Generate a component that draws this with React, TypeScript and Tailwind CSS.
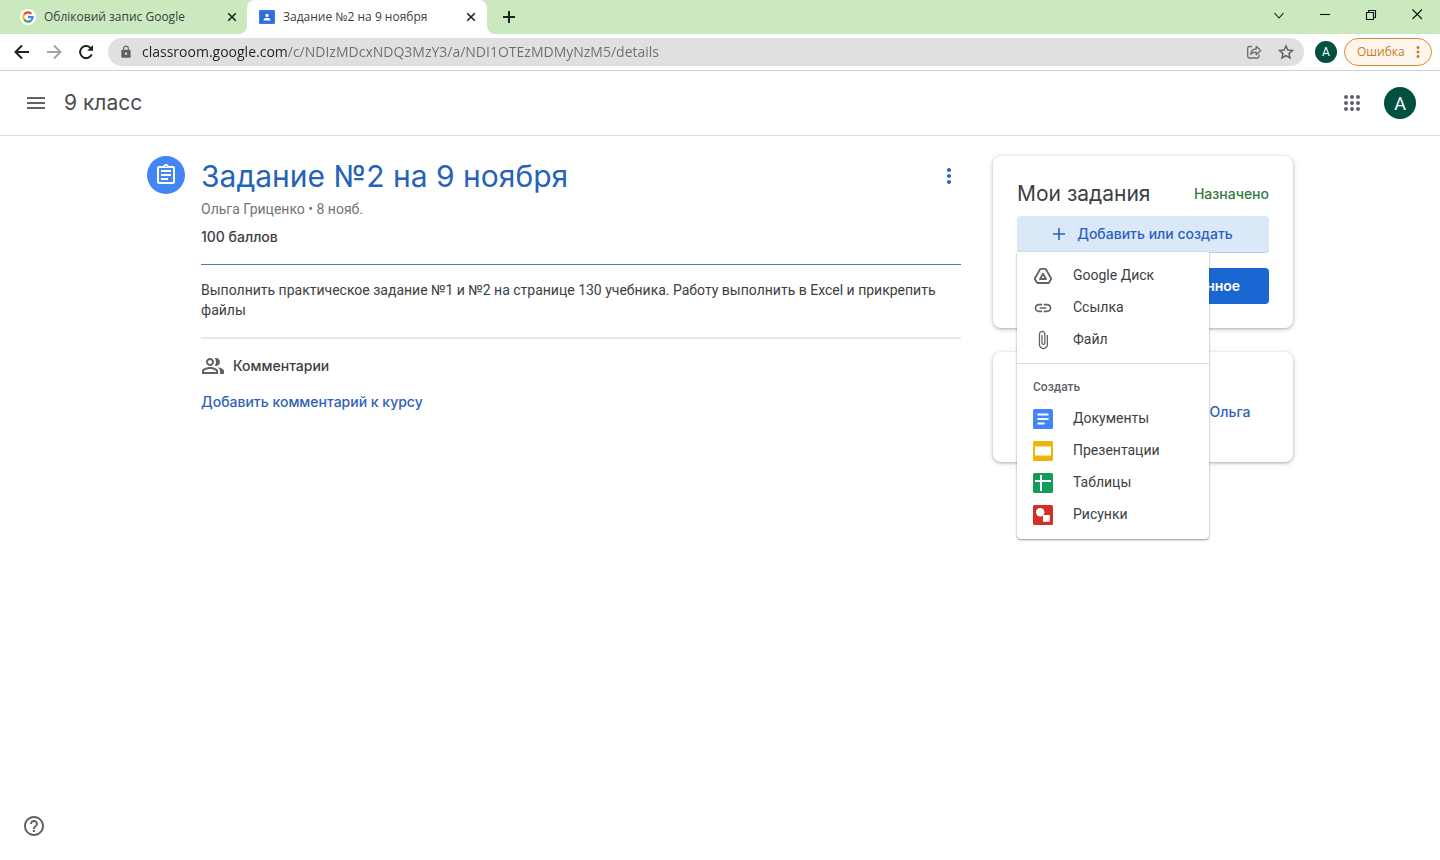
import type { ReactNode } from "react";
import {
  MdAttachFile,
  MdHelpOutline,
  MdLink,
  MdLock,
  MdMenu,
  MdMoreVert,
  MdOutlineAssignment,
} from "react-icons/md";

function GoogleLogo() {
  return (
    <svg viewBox="0 0 18 18" className="size-4 shrink-0" aria-hidden="true">
      <circle cx="9" cy="9" r="9" fill="#fff" />
      <g fill="none" strokeWidth="2.4">
        <path d="M4.6 6.2A5.2 5.2 0 0 1 12.8 5.4" stroke="#ea4335" />
        <path d="M4.6 11.8a5.2 5.2 0 0 1 0-5.7" stroke="#fbbc05" />
        <path d="M12.6 12.8a5.2 5.2 0 0 1-8-1.1" stroke="#34a853" />
        <path d="M9 9.2h5.2a5.2 5.2 0 0 1-1.7 3.7" stroke="#4285f4" />
      </g>
    </svg>
  );
}

function ClassroomLogo() {
  return (
    <svg viewBox="0 0 16 16" className="size-4 shrink-0" aria-hidden="true">
      <rect y="1" width="16" height="14" rx="1" fill="#3b7be0" />
      <rect x="1.5" y="2.5" width="13" height="11" fill="#2f6bd8" />
      <circle cx="8" cy="6.4" r="1.7" fill="#fff" />
      <path d="M4.5 11.5V11c0-1.5 2.2-2.2 3.5-2.2s3.5.7 3.5 2.2v.5z" fill="#fff" />
    </svg>
  );
}

function TabClose({ label }: { label: string }) {
  return (
    <button type="button" aria-label={label} className="flex size-4 shrink-0 items-center justify-center">
      <svg viewBox="0 0 16 16" className="size-4" stroke="#202124" strokeWidth="1.6">
        <path d="M4.2 4.2l7.600 7.600M11.800 4.200l-7.600 7.600" />
      </svg>
    </button>
  );
}

function TabStrip() {
  return (
    <div className="flex h-[34px] items-stretch bg-[#cbe9bf] font-['Open_Sans','Noto_Sans',sans-serif] text-xs text-[#3c4043]">
      <div className="flex w-[247px] items-center gap-2 pr-[7px] pl-5">
        <GoogleLogo />
        <span className="flex-1 truncate">Обліковий запис Google</span>
        <TabClose label="Закрыть вкладку Google" />
      </div>
      <div className="relative flex w-[240px] items-center gap-2 rounded-t-lg bg-white pr-2 pl-3">
        <svg viewBox="0 0 8 8" className="absolute bottom-0 -left-2 size-2" aria-hidden="true">
          <path d="M8 0v8H0a8 8 0 0 0 8-8z" fill="#fff" />
        </svg>
        <svg viewBox="0 0 8 8" className="absolute -right-2 bottom-0 size-2" aria-hidden="true">
          <path d="M0 0v8h8a8 8 0 0 1-8-8z" fill="#fff" />
        </svg>
        <ClassroomLogo />
        <span className="flex-1 truncate">Задание №2 на 9 ноября</span>
        <TabClose label="Закрыть вкладку задания" />
      </div>
      <button type="button" aria-label="Новая вкладка" className="ml-3 flex w-5 items-center justify-center">
        <svg viewBox="0 0 20 20" className="size-5" stroke="#202124" strokeWidth="2">
          <path d="M10 4v12M4 10h12" />
        </svg>
      </button>
      <div className="ml-auto flex items-center gap-[22px] pr-[11px] pb-1">
        <WindowButton label="Поиск вкладок">
          <path d="M7.5 10l4.500 5 4.500-5" />
        </WindowButton>
        <WindowButton label="Свернуть">
          <path d="M7 11.500h10" />
        </WindowButton>
        <WindowButton label="Развернуть">
          <path d="M7.500 9.500h7v7h-7zM9.500 9.500v-2h7v7h-2" />
        </WindowButton>
        <WindowButton label="Закрыть окно">
          <path d="M7.500 6.500l9.500 9.500M17 6.500l-9.500 9.500" />
        </WindowButton>
      </div>
    </div>
  );
}

function WindowButton({ label, children }: { label: string; children: ReactNode }) {
  return (
    <button type="button" aria-label={label}>
      <svg viewBox="0 0 24 24" className="size-6" fill="none" stroke="#111" strokeWidth="1.1">
        {children}
      </svg>
    </button>
  );
}

function Toolbar() {
  return (
    <div className="flex h-[37px] items-center border-b border-[#d0d0d0] bg-white pr-2 pl-3 font-['Open_Sans','Noto_Sans',sans-serif]">
      <div className="flex gap-3">
        <button type="button" aria-label="Назад">
          <svg viewBox="0 0 20 20" className="size-5" fill="none" stroke="#202124" strokeWidth="2">
            <path d="M17 10H4M10 3.500L3.500 10l6.500 6.500" />
          </svg>
        </button>
        <button type="button" aria-label="Вперёд">
          <svg viewBox="0 0 20 20" className="size-5" fill="none" stroke="#a0a3a7" strokeWidth="2">
            <path d="M3 10h13M10 3.500l6.500 6.500-6.500 6.500" />
          </svg>
        </button>
        <button type="button" aria-label="Обновить">
          <svg viewBox="0 0 20 20" className="size-5" fill="none" stroke="#202124" strokeWidth="2">
            <path d="M15.700 12.300A6 6 0 1 1 14.300 5.800L16 7.500" />
            <path d="M17 3v5.800h-5.800z" fill="#202124" stroke="none" />
          </svg>
        </button>
      </div>
      <div className="ml-3 flex h-7 flex-1 items-center rounded-full bg-[#e0e0e0] pr-2 pl-[11px]">
        <MdLock className="size-[14px] text-[#5f6368]" />
        <input
          type="text"
          aria-label="Адресная строка"
          defaultValue="classroom.google.com/c/NDIzMDcxNDQ3MzY3/a/NDI1OTEzMDMyNzM5/details"
          className="ml-[9px] min-w-0 flex-1 bg-[linear-gradient(90deg,#202124_146px,#6b6e72_146px)] bg-clip-text text-sm text-transparent outline-none"
        />
        <button type="button" aria-label="Поделиться">
          <svg viewBox="0 0 20 20" className="size-5" fill="none" stroke="#6b6b6b" strokeWidth="1.300">
            <path d="M8 4.500H5.500a1.800 1.800 0 0 0-1.800 1.800v7.900A1.800 1.800 0 0 0 5.500 16h7.700a1.800 1.800 0 0 0 1.800-1.800V12.500" />
            <path d="M6.800 12.300c.2-3.400 2.200-5.200 5.400-5.300V4.300l4.500 4.200-4.500 4.200v-2.600c-2.300 0-4 .6-5.400 2.200z" strokeLinejoin="round" />
          </svg>
        </button>
        <button type="button" aria-label="Добавить в закладки" className="ml-3">
          <svg viewBox="0 0 20 20" className="size-5" fill="none" stroke="#606366" strokeWidth="1.500">
            <path d="M10 4l1.900 4.100 4.500.5-3.400 3 1 4.400-4-2.300L6 16l1-4.400-3.400-3 4.500-.5z" />
          </svg>
        </button>
      </div>
      <button
        type="button"
        aria-label="Профиль"
        className="ml-[11px] flex size-[22px] items-center justify-center rounded-full bg-[#00503f] font-['Roboto',sans-serif] text-xs text-white"
      >
        A
      </button>
      <button
        type="button"
        className="ml-[7px] flex h-7 w-[88px] items-center justify-between rounded-full border border-[#d98c35] bg-[#fef6ec] pr-1 pl-3 text-xs text-[#c77a28]"
      >
        Ошибка
        <MdMoreVert className="size-[18px]" />
      </button>
    </div>
  );
}

function ClassHeader() {
  return (
    <header className="flex h-[65px] items-center border-b border-[#dcdcdc] px-6">
      <button type="button" aria-label="Главное меню">
        <MdMenu className="size-6 text-[#5f6368]" />
      </button>
      <a href="#class" className="ml-4 font-['Inter','Roboto',sans-serif] text-[21px] leading-7 text-[#4a4d51]">
        9 класс
      </a>
      <button type="button" aria-label="Приложения Google" className="ml-auto">
        <svg viewBox="0 0 24 24" className="size-6" fill="#5f6368">
          {[6, 12, 18].map((cy) => [6, 12, 18].map((cx) => <circle key={`${cx}-${cy}`} cx={cx} cy={cy} r="2" />))}
        </svg>
      </button>
      <button
        type="button"
        aria-label="Аккаунт"
        className="ml-5 flex size-8 items-center justify-center rounded-full bg-[#00503f] pt-px text-lg text-white"
      >
        A
      </button>
    </header>
  );
}

function Assignment() {
  return (
    <article className="flex min-w-0 flex-1 gap-4">
      <div className="flex size-[38px] shrink-0 items-center justify-center rounded-full bg-[#4285f4]">
        <MdOutlineAssignment className="size-6 text-white" />
      </div>
      <div className="min-w-0 flex-1">
        <div className="flex h-10 items-center justify-between">
          <h1 className="font-['Inter','Roboto',sans-serif] text-[30px] leading-10 text-[#2563b8]">
            Задание №2 на 9 ноября
          </h1>
          <button type="button" aria-label="Другие действия">
            <MdMoreVert className="size-6 text-[#2f62b5]" />
          </button>
        </div>
        <p className="mt-[3px] text-sm leading-5 text-[#70757a]">Ольга Гриценко • 8 нояб.</p>
        <p className="mt-2 font-['Inter','Roboto',sans-serif] text-sm leading-5 font-medium text-[#3c4043]">100 баллов</p>
        <p className="mt-[17px] border-t border-b-2 border-t-[#4a78bd] border-b-[#e6e9ea] pt-[15px] pb-[17px] text-sm leading-5 text-[#3c4043]">
          Выполнить практическое задание №1 и №2 на странице 130 учебника. Работу выполнить в Excel и прикрепить файлы
        </p>
        <section className="font-['Inter','Roboto',sans-serif] text-sm font-medium">
          <h2 className="mt-[15px] flex h-6 items-center gap-2 text-[#3c4043]">
            <svg viewBox="0 0 24 24" className="size-6 text-[#5f6368]" fill="currentColor" aria-hidden="true">
              <path d="M15 8c0-1.420-.5-2.730-1.330-3.760.42-.14.86-.24 1.330-.24 2.210 0 4 1.790 4 4s-1.790 4-4 4c-.43 0-.84-.09-1.230-.21A5.980 5.980 0 0 0 15 8zm1.660 5.130C18.030 14.060 19 15.320 19 17v3h4v-3c0-2.180-3.580-3.470-6.340-3.870zM9 6c-1.100 0-2 .9-2 2s.9 2 2 2 2-.9 2-2-.9-2-2-2m0-2c2.210 0 4 1.790 4 4s-1.790 4-4 4-4-1.790-4-4 1.790-4 4-4zm0 11c-2.700 0-5.800 1.290-6 2.010V18h12v-1c-.2-.71-3.300-2-6-2m0-2c2.670 0 8 1.340 8 4v3H1v-3c0-2.660 5.330-4 8-4z" />
            </svg>
            Комментарии
          </h2>
          <a href="#comment" className="mt-3 inline-block leading-6 text-[#2f62b5]">
            Добавить комментарий к курсу
          </a>
        </section>
      </div>
    </article>
  );
}

function MenuItem({ icon, children }: { icon: ReactNode; children: ReactNode }) {
  return (
    <li role="none">
      <button type="button" role="menuitem" className="flex h-8 w-full items-center gap-5 px-4 text-left">
        {icon}
        <span className="pb-0.5">{children}</span>
      </button>
    </li>
  );
}

function AppIcon({ color, children }: { color: string; children: ReactNode }) {
  return (
    <svg viewBox="0 0 20 20" className="size-5" aria-hidden="true">
      <rect width="20" height="20" rx="1.500" fill={color} />
      {children}
    </svg>
  );
}

function AddMenu() {
  return (
    <div
      role="menu"
      className="absolute top-full left-0 z-10 w-48 rounded-b bg-white py-2 text-sm text-[#3c4043] shadow-[0_1px_2px_rgba(60,64,67,0.5),0_0_3px_rgba(60,64,67,0.15)]"
    >
      <ul role="none" className="border-b border-[#dadce0] pb-[7px]">
        <MenuItem
          icon={
            <svg viewBox="0 0 20 20" className="size-5" fill="none" stroke="#5f6368" strokeWidth="1.800" strokeLinejoin="round" aria-hidden="true">
              <path d="M8 2.800h4q.6 0 .9.500l5.100 8.900q.3.500 0 1l-1.900 3.300q-.3.500-.9.500H4.800q-.6 0-.9-.5L2 13.200q-.3-.5 0-1l5.100-8.900q.3-.5.900-.5z" />
              <path d="M10 7.800l3 5.200H7z" />
            </svg>
          }
        >
          Google Диск
        </MenuItem>
        <MenuItem icon={<MdLink className="size-5 text-[#5f6368]" />}>Ссылка</MenuItem>
        <MenuItem icon={<MdAttachFile className="size-5 text-[#5f6368]" />}>Файл</MenuItem>
      </ul>
      <h3 className="mt-[7px] flex h-8 items-center px-4 text-xs font-medium text-[#5f6368]">Создать</h3>
      <ul role="none">
        <MenuItem
          icon={
            <AppIcon color="#4285f4">
              <path d="M4.500 5.500h11M4.500 10h11M4.500 14.500h7" stroke="#fff" strokeWidth="2" />
            </AppIcon>
          }
        >
          Документы
        </MenuItem>
        <MenuItem
          icon={
            <AppIcon color="#edb40c">
              <rect x="2" y="5.500" width="16" height="9" fill="#fff" />
            </AppIcon>
          }
        >
          Презентации
        </MenuItem>
        <MenuItem
          icon={
            <AppIcon color="#149b57">
              <path d="M2 8h16M8 2v16" stroke="#fff" strokeWidth="2" />
            </AppIcon>
          }
        >
          Таблицы
        </MenuItem>
        <MenuItem
          icon={
            <AppIcon color="#cf3126">
              <circle cx="7.200" cy="7.200" r="4.200" fill="#fff" />
              <rect x="10" y="10" width="6.800" height="6.800" fill="#fff" />
            </AppIcon>
          }
        >
          Рисунки
        </MenuItem>
      </ul>
    </div>
  );
}

function Sidebar() {
  const card = "rounded-lg bg-white p-6 shadow-[0_1px_3px_rgba(60,64,67,0.35),0_1px_6px_rgba(60,64,67,0.15)]";
  return (
    <aside className="w-[300px] shrink-0 font-['Inter','Roboto',sans-serif]">
      <section className={card}>
        <div className="mb-2 flex h-7 items-center justify-between">
          <h2 className="text-[21px] leading-7 text-[#3c4043]">Мои задания</h2>
          <span className="text-sm font-medium text-[#33793c]">Назначено</span>
        </div>
        <div className="relative text-sm">
          <button
            type="button"
            aria-haspopup="menu"
            aria-expanded="true"
            className="flex h-9 w-full items-center justify-center gap-2 rounded bg-[#dbe8f8] pr-1 font-medium text-[#2a60c0] shadow-[0_1px_0_#b3cdf0]"
          >
            <svg viewBox="0 0 20 20" className="size-5" stroke="currentColor" strokeWidth="1.600" aria-hidden="true">
              <path d="M10 4v12M4 10h12" />
            </svg>
            Добавить или создать
          </button>
          <div className="font-['Roboto',sans-serif]">
            <AddMenu />
          </div>
        </div>
        <button
          type="button"
          className="mt-4 flex h-9 w-full items-center justify-center rounded bg-[#1967d2] text-sm font-semibold whitespace-nowrap text-white"
        >
          Отметить как выполненное
        </button>
      </section>
      <section className={`${card} mt-6 h-[110px]`}>
        <a href="#private" className="mt-6 block text-center text-sm leading-6 font-medium whitespace-nowrap text-[#2f62b5]">
          Добавить комментарий: Ольга
        </a>
      </section>
    </aside>
  );
}

export default function App() {
  return (
    <div className="flex min-h-screen flex-col bg-white font-['Roboto','Liberation_Sans',sans-serif]">
      <TabStrip />
      <Toolbar />
      <ClassHeader />
      <main className="mx-auto flex w-full max-w-[1146px] items-start gap-8 pt-5">
        <Assignment />
        <Sidebar />
      </main>
      <footer className="mt-auto px-[22px] pb-[22px]">
        <button type="button" aria-label="Справка" className="block">
          <MdHelpOutline className="size-6 text-[#5f6368]" />
        </button>
      </footer>
    </div>
  );
}
